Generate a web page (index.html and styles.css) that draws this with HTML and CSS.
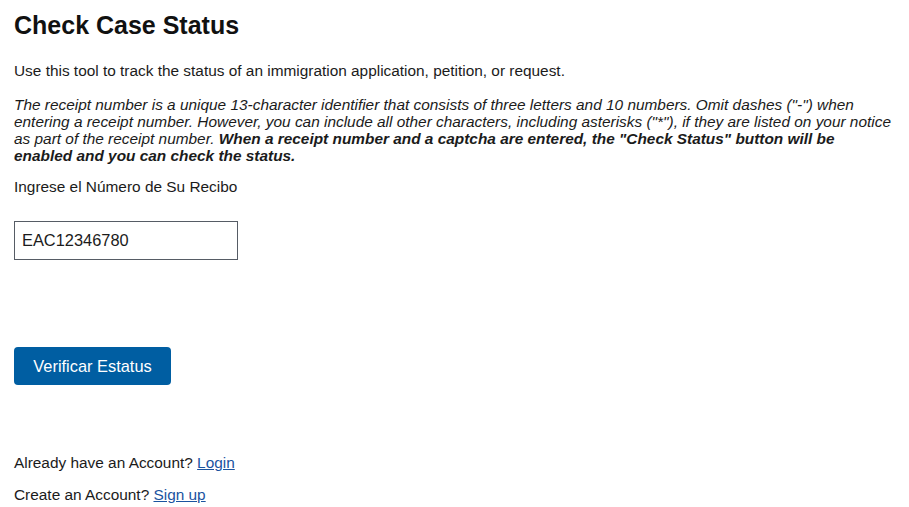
FILE: index.html
```html
<!DOCTYPE html>
<html lang="en">
<head>
<meta charset="utf-8">
<title>Check Case Status</title>
<link rel="stylesheet" href="styles.css">
</head>
<body>
<main class="page">
  <h1 class="title">Check Case Status</h1>
  <p class="intro">Use this tool to track the status of an immigration application, petition, or request.</p>
  <p class="note">The receipt number is a unique 13-character identifier that consists of three letters and 10 numbers. Omit dashes ("-") when entering a receipt number. However, you can include all other characters, including asterisks ("*"), if they are listed on your notice as part of the receipt number. <strong>When a receipt number and a captcha are entered, the "Check Status" button will be enabled and you can check the status.</strong></p>
  <label class="label" for="receipt">Ingrese el Número de Su Recibo</label>
  <input class="field" id="receipt" type="text" value="EAC12346780">
  <button class="btn" type="button">Verificar Estatus</button>
  <p class="account">Already have an Account? <a href="#">Login</a></p>
  <p class="account">Create an Account? <a href="#">Sign up</a></p>
</main>
</body>
</html>
```

FILE: styles.css
```css
html, body {
  margin: 0;
  padding: 0;
  background: #ffffff;
}
body {
  font-family: "Liberation Sans", Arial, sans-serif;
  color: #1b1b1b;
  font-size: 15.4px;
}
.page {
  padding: 8px 14px 0 14px;
  display: flex;
  flex-direction: column;
  align-items: flex-start;
}
.title {
  font-size: 25px;
  font-weight: 700;
  margin: 0;
  line-height: 35px;
  color: #111;
}
.intro {
  margin: 19px 0 0 0;
  line-height: 17px;
}
.note {
  margin: 17px 0 0 0;
  font-style: italic;
  line-height: 17px;
}
.note strong {
  font-weight: 700;
}
.label {
  margin-top: 14px;
  line-height: 17px;
}
.field {
  margin-top: 26px;
  box-sizing: border-box;
  width: 224px;
  height: 39px;
  border: 1px solid #565c65;
  border-radius: 0;
  padding: 0 7px;
  font-family: inherit;
  font-size: 16.4px;
  color: #1b1b1b;
}
.btn {
  margin-top: 87px;
  box-sizing: border-box;
  width: 157px;
  height: 38px;
  border: 0;
  border-radius: 4px;
  background: #005ea2;
  color: #ffffff;
  font-family: inherit;
  font-size: 16.4px;
  padding: 0;
}
.account {
  margin: 0;
  line-height: 17px;
}
.btn + .account {
  margin-top: 69px;
}
.account + .account {
  margin-top: 15px;
}
.account a {
  color: #1a539f;
  text-decoration: underline;
}
```
